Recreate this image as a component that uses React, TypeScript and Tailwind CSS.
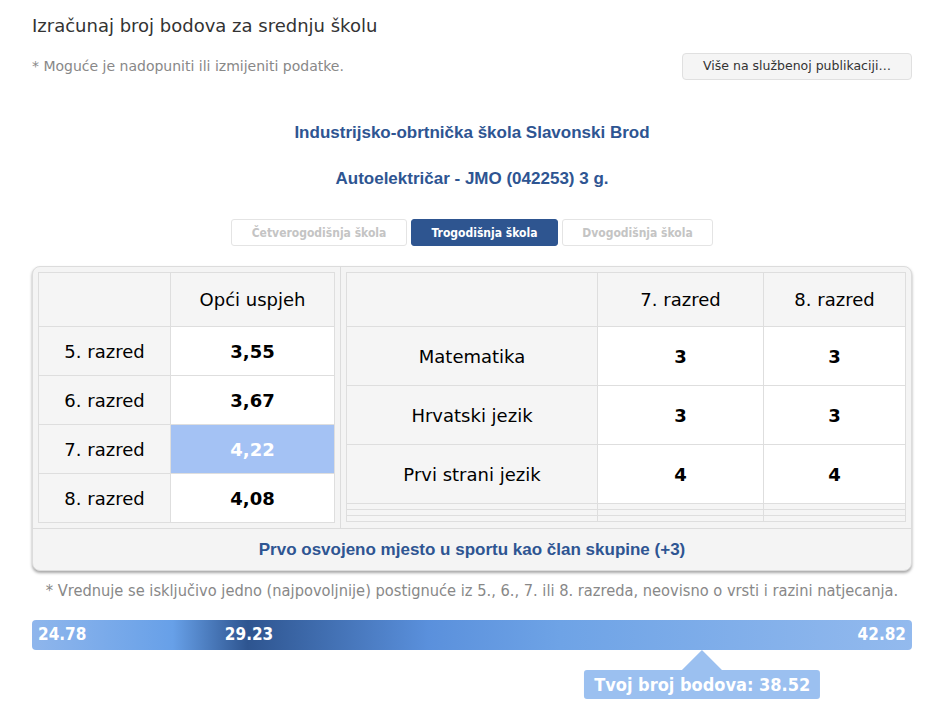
import React from 'react';

const MIN = 24.78;
const MAX = 42.82;
const LAST = 29.23;
const SCORE = 38.52;

const sans = "font-['DejaVu_Sans',sans-serif]";
const narrow = "font-['DejaVu_Sans_Condensed','DejaVu_Sans',sans-serif]";
const arial = "font-['Liberation_Sans',Arial,sans-serif]";

const grades = [
    { label: '5. razred', value: '3,55' },
    { label: '6. razred', value: '3,67' },
    { label: '7. razred', value: '4,22', best: true },
    { label: '8. razred', value: '4,08' },
];

const subjects = [
    { name: 'Matematika', g7: '3', g8: '3' },
    { name: 'Hrvatski jezik', g7: '3', g8: '3' },
    { name: 'Prvi strani jezik', g7: '4', g8: '4' },
];

function pct(v: number) {
    return ((v - MIN) / (MAX - MIN)) * 100;
}

export default function App() {
    return (
        <div className={`min-h-screen bg-white ${sans} text-[#333]`}>
            <div className="pl-8 w-[912px] pt-[14px]">
                {/* Header */}
                <h1 className="text-[18px] leading-[24px] text-[#333]">Izračunaj broj bodova za srednju školu</h1>

                <div className="flex items-center justify-between mt-[15px]">
                    <p className="text-[14px] text-[#888]">* Moguće je nadopuniti ili izmijeniti podatke.</p>
                    <button className="w-[230px] h-[27px] rounded-[4px] border border-[#e0e0e0] bg-[#f5f5f5] text-[12.5px] text-[#333]">
                        Više na službenoj publikaciji…
                    </button>
                </div>

                {/* School */}
                <div className={`${arial} text-center text-[#2e5592] font-bold text-[17px] mt-[42px]`}>
                    <div className="leading-[22px]">Industrijsko-obrtnička škola Slavonski Brod</div>
                    <div className="leading-[22px] mt-[24px]">Autoelektričar - JMO (042253) 3 g.</div>
                </div>

                {/* Tabs */}
                <div className={`${narrow} flex justify-center gap-[4px] mt-[29px] text-[12px] font-bold`}>
                    <button className="w-[176px] h-[27px] rounded-[3px] border border-[#e4e4e4] text-[#c4c4c4] bg-white">Četverogodišnja škola</button>
                    <button className="w-[147px] h-[27px] rounded-[3px] border border-[#2e5590] bg-[#2e5590] text-white">Trogodišnja škola</button>
                    <button className="w-[151px] h-[27px] rounded-[3px] border border-[#e4e4e4] text-[#c4c4c4] bg-white">Dvogodišnja škola</button>
                </div>

                {/* Card */}
                <div className="mt-[20px] rounded-[8px] border border-[#dcdcdc] bg-[#f4f4f4] shadow-[0_2px_3px_rgba(0,0,0,0.35)] overflow-hidden">
                    <div className="flex border-b border-[#dcdcdc]">
                        <div className="w-[308px] px-[5px] pt-[5px] pb-[4px] border-r border-[#dcdcdc]">
                            <table className="w-full border-collapse text-[18px]">
                                <tbody>
                                    <tr className="h-[54px]">
                                        <td className="w-[132px] border border-[#dedede] bg-[#f5f5f5]"></td>
                                        <td className="border border-[#dedede] bg-[#f5f5f5] text-center text-black">Opći uspjeh</td>
                                    </tr>
                                    {grades.map((g) => (
                                        <tr key={g.label} className="h-[49px]">
                                            <td className="border border-[#dedede] bg-[#f5f5f5] text-center text-black">{g.label}</td>
                                            <td className={`border border-[#dedede] text-center font-bold ${g.best ? 'bg-[#a4c2f4] text-white' : 'bg-white text-black'}`}>
                                                {g.value}
                                            </td>
                                        </tr>
                                    ))}
                                </tbody>
                            </table>
                        </div>
                        <div className="flex-1 px-[5px] pt-[5px] pb-[6px]">
                            <table className="w-full border-collapse text-[18px]">
                                <tbody>
                                    <tr className="h-[54px]">
                                        <td className="w-[251px] border border-[#dedede] bg-[#f5f5f5]"></td>
                                        <td className="w-[166px] border border-[#dedede] bg-[#f5f5f5] text-center text-black">7. razred</td>
                                        <td className="border border-[#dedede] bg-[#f5f5f5] text-center text-black">8. razred</td>
                                    </tr>
                                    {subjects.map((s) => (
                                        <tr key={s.name} className="h-[59px]">
                                            <td className="border border-[#dedede] bg-[#f5f5f5] text-center text-black">{s.name}</td>
                                            <td className="border border-[#dedede] bg-white text-center font-bold text-black">{s.g7}</td>
                                            <td className="border border-[#dedede] bg-white text-center font-bold text-black">{s.g8}</td>
                                        </tr>
                                    ))}
                                    {[0, 1, 2].map((i) => (
                                        <tr key={i} className="h-[6px]">
                                            <td className="border border-[#dedede] bg-[#f5f5f5] p-0"></td>
                                            <td className="border border-[#dedede] bg-[#f5f5f5] p-0"></td>
                                            <td className="border border-[#dedede] bg-[#f5f5f5] p-0"></td>
                                        </tr>
                                    ))}
                                </tbody>
                            </table>
                        </div>
                    </div>
                    <div className={`${arial} h-[41px] flex items-center justify-center text-[17px] font-bold text-[#2e5592]`}>
                        Prvo osvojeno mjesto u sportu kao član skupine (+3)
                    </div>
                </div>

                <p className={`${narrow} text-center text-[16.3px] text-[#888] mt-[9px] leading-[22px]`}>
                    * Vrednuje se isključivo jedno (najpovoljnije) postignuće iz 5., 6., 7. ili 8. razreda, neovisno o vrsti i razini natjecanja.
                </p>

                {/* Score bar */}
                <div className={`${narrow} relative mt-[18px]`}>
                    <div className="relative h-[30px] rounded-[4px] bg-[linear-gradient(to_right,#8fb6ec_0%,#67a0e8_16%,#2e5590_24.5%,#5a90dc_45%,#6ea3e6_60%,#93baee_100%)] text-white text-[17px] font-bold flex items-center justify-between px-[6px]">
                        <span>{MIN.toFixed(2)}</span>
                        <span className="absolute -translate-x-1/2" style={{ left: `${pct(LAST)}%` }}>{LAST.toFixed(2)}</span>
                        <span>{MAX.toFixed(2)}</span>
                    </div>
                    <div className="h-[50px]">
                        <div className="absolute top-[30px] -translate-x-1/2 flex flex-col items-center" style={{ left: `${pct(SCORE)}%` }}>
                            <div className="w-0 h-0 border-l-[20px] border-r-[20px] border-b-[20px] border-l-transparent border-r-transparent border-b-[#9bc0f0]"></div>
                            <div className="h-[29px] px-[10px] rounded-[3px] bg-[#9bc0f0] text-white text-[18px] font-bold flex items-center whitespace-nowrap">
                                Tvoj broj bodova: {SCORE.toFixed(2)}
                            </div>
                        </div>
                    </div>
                </div>
            </div>
        </div>
    );
}
